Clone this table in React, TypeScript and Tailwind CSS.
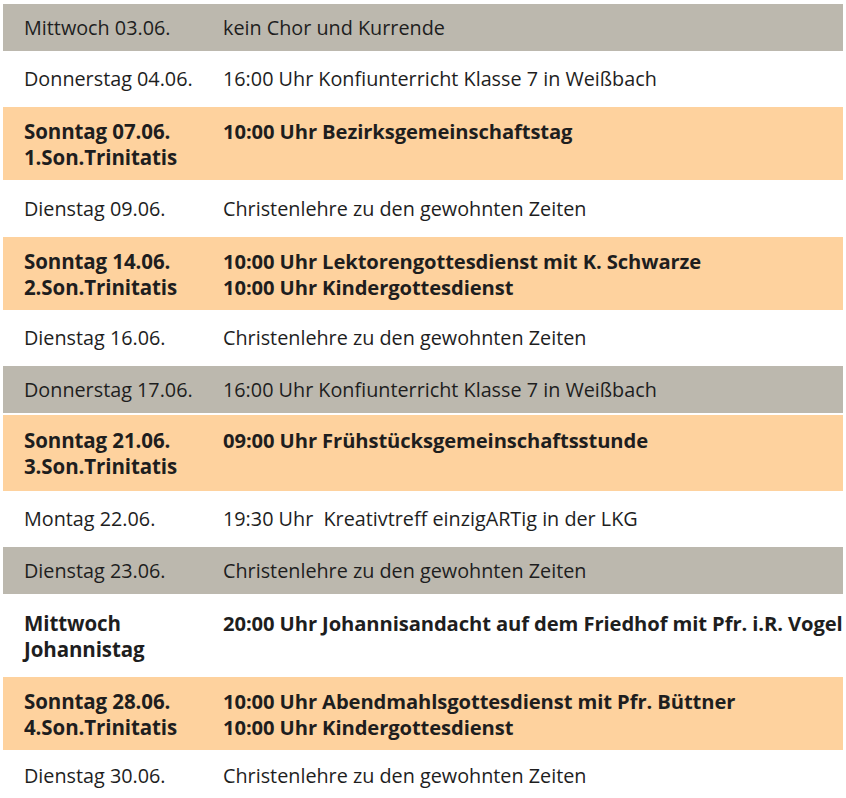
type Row = {
  left: string[]
  right: string[]
  bg: 'gray' | 'white' | 'orange'
  bold?: boolean
  h: string
}

const rows: Row[] = [
  { left: ['Mittwoch 03.06.'], right: ['kein Chor und Kurrende'], bg: 'gray', h: 'h-[47px]' },
  { left: ['Donnerstag 04.06.'], right: ['16:00 Uhr Konfiunterricht Klasse 7 in Weißbach'], bg: 'white', h: 'h-[52px]' },
  { left: ['Sonntag 07.06.', '1.Son.Trinitatis'], right: ['10:00 Uhr Bezirksgemeinschaftstag', ''], bg: 'orange', bold: true, h: 'h-[73px]' },
  { left: ['Dienstag 09.06.'], right: ['Christenlehre zu den gewohnten Zeiten'], bg: 'white', h: 'h-[53px]' },
  { left: ['Sonntag 14.06.', '2.Son.Trinitatis'], right: ['10:00 Uhr Lektorengottesdienst mit K. Schwarze', '10:00 Uhr Kindergottesdienst'], bg: 'orange', bold: true, h: 'h-[73px]' },
  { left: ['Dienstag 16.06.'], right: ['Christenlehre zu den gewohnten Zeiten'], bg: 'white', h: 'h-[52px]' },
  { left: ['Donnerstag 17.06.'], right: ['16:00 Uhr Konfiunterricht Klasse 7 in Weißbach'], bg: 'gray', h: 'h-[47px]' },
  { left: ['Sonntag 21.06.', '3.Son.Trinitatis'], right: ['09:00 Uhr Frühstücksgemeinschaftsstunde', ''], bg: 'orange', bold: true, h: 'h-[76px]' },
  { left: ['Montag 22.06.'], right: ['19:30 Uhr  Kreativtreff einzigARTig in der LKG'], bg: 'white', h: 'h-[52px]' },
  { left: ['Dienstag 23.06.'], right: ['Christenlehre zu den gewohnten Zeiten'], bg: 'gray', h: 'h-[47px]' },
  { left: ['Mittwoch', 'Johannistag'], right: ['20:00 Uhr Johannisandacht auf dem Friedhof mit Pfr. i.R. Vogel', ''], bg: 'white', bold: true, h: 'h-[79px]' },
  { left: ['Sonntag 28.06.', '4.Son.Trinitatis'], right: ['10:00 Uhr Abendmahlsgottesdienst mit Pfr. Büttner', '10:00 Uhr Kindergottesdienst'], bg: 'orange', bold: true, h: 'h-[73px]' },
  { left: ['Dienstag 30.06.'], right: ['Christenlehre zu den gewohnten Zeiten'], bg: 'white', h: 'h-[48px]' },
]

const bgClass = {
  gray: 'bg-[#bcb8ae]',
  white: 'bg-white',
  orange: 'bg-[#fed29e]',
}

export default function App() {
  return (
    <div className="w-[846px] h-[798px] overflow-hidden bg-white pt-[4px] pl-[3px] font-['Open_Sans',sans-serif] text-[#1e1e1e]">
      <div className="flex w-[840px] flex-col gap-[2px]">
        {rows.map((row, i) => (
          <div key={i} className={`flex items-center pl-[21px] ${row.h} ${bgClass[row.bg]}`}>
            <div className={`w-[199px] shrink-0 leading-[26px] ${row.bold ? 'font-bold text-[20.5px] tracking-[-0.1px]' : 'text-[19.8px]'}`}>
              {row.left.map((t, j) => (
                <div key={j} className="whitespace-nowrap">{t}</div>
              ))}
            </div>
            <div className={`leading-[26px] ${row.bold ? 'font-bold text-[20.2px] tracking-[-0.1px]' : 'text-[19.8px]'}`}>
              {row.right.map((t, j) => (
                <div key={j} className="whitespace-pre">{t || '\u00a0'}</div>
              ))}
            </div>
          </div>
        ))}
      </div>
    </div>
  )
}
